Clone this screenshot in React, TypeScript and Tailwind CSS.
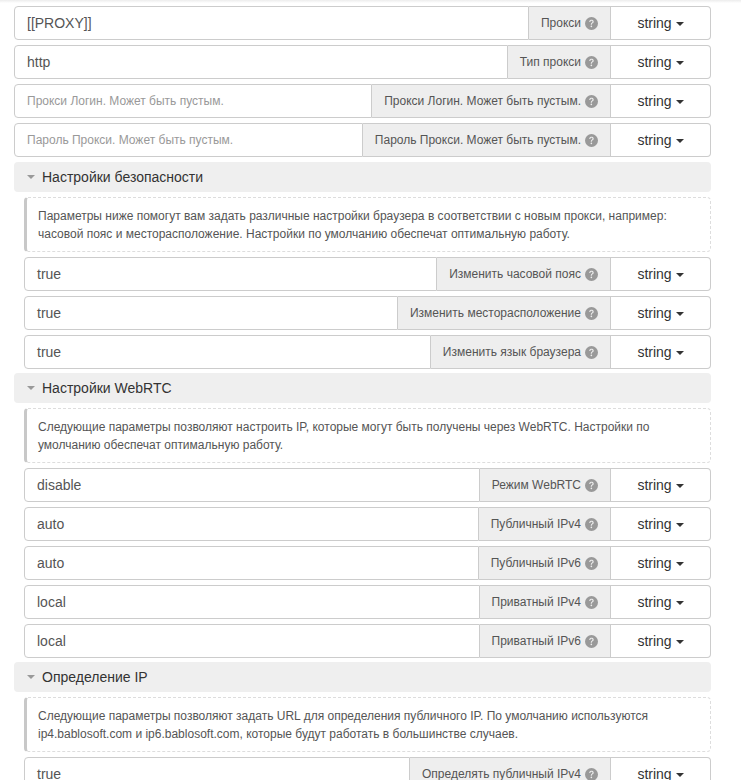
import { BsQuestionCircleFill } from 'react-icons/bs';

type Row = { value?: string; placeholder?: string; label: string };

const font = { fontFamily: '"Liberation Sans", Arial, sans-serif' };

function Field({ row, nested }: { row: Row; nested?: boolean }) {
  return (
    <div className={`flex h-[34px] mb-[5px] ${nested ? 'ml-[10px]' : ''}`}>
      <div className="flex-1 min-w-0 flex items-center border border-[#ccc] rounded-l-[4px] px-[12px] bg-white">
        {row.value ? (
          <span className="text-[14px] text-[#555]">{row.value}</span>
        ) : (
          <span className="text-[12px] text-[#999]">{row.placeholder}</span>
        )}
      </div>
      <div className="flex items-center gap-[4px] px-[12px] bg-[#eee] border-y border-r border-[#ccc] text-[12px] text-[#555] whitespace-nowrap">
        {row.label}
        <BsQuestionCircleFill className="text-[#999] w-[13px] h-[13px]" />
      </div>
      <div className="w-[100px] flex items-center justify-center gap-[4px] border-y border-r border-[#ccc] rounded-r-[4px] bg-white text-[14px] text-[#333]">
        string
        <span className="w-0 h-0 border-t-[4px] border-t-[#333] border-x-[4px] border-x-transparent mt-[1px]" />
      </div>
    </div>
  );
}

function Section({ title, tight }: { title: string; tight?: boolean }) {
  return (
    <div
      className={`flex items-center h-[30px] mb-[5px] bg-[#efefef] rounded-[4px] pl-[13px] text-[14px] text-[#333] ${
        tight ? '-mt-[1px]' : ''
      }`}
    >
      <span className="w-0 h-0 border-t-[4px] border-t-[#999] border-x-[4px] border-x-transparent mr-[7px]" />
      {title}
    </div>
  );
}

function Info({ lines }: { lines: string[] }) {
  return (
    <div className="ml-[10px] mb-[5px] h-[55px] flex flex-col justify-center border border-dashed border-[#ddd] border-l-[3px] border-l-[#c8c8c8] [border-left-style:solid] rounded-[4px] pl-[11px] text-[12px] leading-[18px] text-[#555]">
      {lines.map((l) => (
        <div key={l} className="whitespace-nowrap">{l}</div>
      ))}
    </div>
  );
}

export default function App() {
  const top: Row[] = [
    { value: '[[PROXY]]', label: 'Прокси' },
    { value: 'http', label: 'Тип прокси' },
    { placeholder: 'Прокси Логин. Может быть пустым.', label: 'Прокси Логин. Может быть пустым.' },
    { placeholder: 'Пароль Прокси. Может быть пустым.', label: 'Пароль Прокси. Может быть пустым.' },
  ];
  const security: Row[] = [
    { value: 'true', label: 'Изменить часовой пояс' },
    { value: 'true', label: 'Изменить месторасположение' },
    { value: 'true', label: 'Изменить язык браузера' },
  ];
  const webrtc: Row[] = [
    { value: 'disable', label: 'Режим WebRTC' },
    { value: 'auto', label: 'Публичный IPv4' },
    { value: 'auto', label: 'Публичный IPv6' },
    { value: 'local', label: 'Приватный IPv4' },
    { value: 'local', label: 'Приватный IPv6' },
  ];
  const ip: Row[] = [
    { value: 'true', label: 'Определять публичный IPv4' },
    { value: 'true', label: 'Определять публичный IPv6' },
  ];

  return (
    <div className="w-[741px] h-[780px] overflow-hidden bg-white" style={font}>
      <div className="h-[3px] bg-gradient-to-b from-[#ececec] to-white" />
      <div className="pl-[14px] pr-[30px] pt-[3px]">
        {top.map((r) => (
          <Field key={r.label} row={r} />
        ))}
        <Section title="Настройки безопасности" />
        <Info
          lines={[
            'Параметры ниже помогут вам задать различные настройки браузера в соответствии с новым прокси, например:',
            'часовой пояс и месторасположение. Настройки по умолчанию обеспечат оптимальную работу.',
          ]}
        />
        {security.map((r) => (
          <Field key={r.label} row={r} nested />
        ))}
        <Section title="Настройки WebRTC" tight />
        <Info
          lines={[
            'Следующие параметры позволяют настроить IP, которые могут быть получены через WebRTC. Настройки по',
            'умолчанию обеспечат оптимальную работу.',
          ]}
        />
        {webrtc.map((r) => (
          <Field key={r.label} row={r} nested />
        ))}
        <Section title="Определение IP" tight />
        <Info
          lines={[
            'Следующие параметры позволяют задать URL для определения публичного IP. По умолчанию используются',
            'ip4.bablosoft.com и ip6.bablosoft.com, которые будут работать в большинстве случаев.',
          ]}
        />
        {ip.map((r) => (
          <Field key={r.label} row={r} nested />
        ))}
      </div>
    </div>
  );
}
